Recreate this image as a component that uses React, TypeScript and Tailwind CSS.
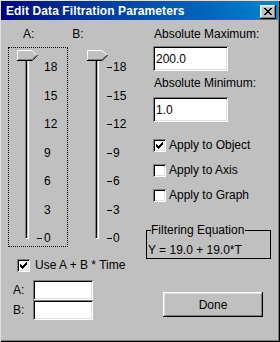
import React from "react";

const sunken =
  "shadow-[inset_1px_1px_#808080,inset_-1px_-1px_#ffffff,inset_2px_2px_#000000,inset_-2px_-2px_#dfdfdf]";
const raised =
  "shadow-[inset_-1px_-1px_#000000,inset_1px_1px_#ffffff,inset_-2px_-2px_#808080,inset_2px_2px_#dfdfdf]";

function Check({ checked }: { checked: boolean }) {
  return (
    <svg width="13" height="13" viewBox="0 0 13 13" className="shrink-0 block">
      <rect x="0" y="0" width="13" height="13" fill="#808080" />
      <rect x="1" y="1" width="12" height="12" fill="#ffffff" />
      <rect x="1" y="1" width="11" height="11" fill="#000000" />
      <rect x="2" y="2" width="10" height="10" fill="#dfdfdf" />
      <rect x="2" y="2" width="9" height="9" fill="#ffffff" />
      {checked && (
        <path
          d="M3 5h1v1h1v1h1V6h1V5h1V4h1V3h1v3h-1v1h-1v1h-1v1h-1v1H5V9H4V8H3z"
          fill="#000000"
        />
      )}
    </svg>
  );
}

function Thumb() {
  return (
    <svg width="21" height="11" viewBox="0 0 21 11" className="block">
      <polygon points="0,0 15,0 20,5 15,10 0,10" fill="#c0c0c0" />
      <polyline points="0.5,10 0.5,0.5 15,0.5 19.5,5" fill="none" stroke="#ffffff" strokeWidth="1" />
      <polyline points="1,9.5 15,9.5 19,5.5" fill="none" stroke="#808080" strokeWidth="1" />
      <polyline points="0,10.5 15.2,10.5 20.5,5.2" fill="none" stroke="#000000" strokeWidth="1" />
    </svg>
  );
}

function Slider({
  labels,
  focused,
  allTicks,
  numLeft,
}: {
  labels: string[];
  focused: boolean;
  allTicks: boolean;
  numLeft: number;
}) {
  return (
    <div
      className={
        "relative w-[60px] h-[200px] border border-dotted " +
        (focused ? "border-black" : "border-transparent")
      }
    >
      {/* track */}
      <div className="absolute left-[16px] top-[6px] w-[4px] h-[185px] border-l border-t border-l-[#808080] border-t-[#808080] border-r border-b border-r-white border-b-white">
        <div className="w-[1px] h-full bg-black ml-0" />
      </div>
      {/* thumb */}
      <div className="absolute left-[8px] top-[2px]">
        <Thumb />
      </div>
      {labels.map((l, i) => {
        const center = 67 + i * 28.5 - 48;
        const showTick = allTicks || i === labels.length - 1;
        return (
          <React.Fragment key={l}>
            {showTick && (
              <div
                className="absolute left-[28px] w-[5px] h-[1px] bg-black"
                style={{ top: Math.round(center) }}
              />
            )}
            <div
              className="absolute leading-[14px]"
              style={{ top: Math.round(center - 7), left: numLeft }}
            >
              {l}
            </div>
          </React.Fragment>
        );
      })}
    </div>
  );
}

export default function App() {
  const aLabels = ["18", "15", "12", "9", "6", "3", "0"];
  const bLabels = ["18", "15", "12", "9", "6", "3", "0"];
  return (
    <div className="w-[280px] h-[342px] bg-[#c0c0c0] text-black text-[12px] leading-[14px] font-['Liberation_Sans',Arial,sans-serif] pt-[1px] pl-[1px] pr-[2px] shadow-[inset_1px_1px_#dfdfdf,inset_-1px_-1px_#000000,inset_-2px_-2px_#808080] overflow-hidden">
      {/* Title bar */}
      <div className="h-[19px] bg-linear-to-r from-[#000080] to-[#1084d0] flex items-center justify-between pl-[5px] pr-[2px]">
        <span className="text-white font-bold text-[12px] leading-[14px] mt-[1px] tracking-[0.1px]">
          Edit Data Filtration Parameters
        </span>
        <div className={"w-[16px] h-[14px] bg-[#c0c0c0] flex items-center justify-center mt-[2px] " + raised}>
          <svg width="8" height="7" viewBox="0 0 8 7" className="block mt-[-1px]">
            <path d="M0 0h2v1h1v1h2V1h1V0h2v1H7v1H6v1H5v1h1v1h1v1h1v1H6V6H5V5H3v1H2v1H0V6h1V5h1V4h1V3H2V2H1V1H0z" fill="#000" />
          </svg>
        </div>
      </div>

      <div className="flex">
        {/* Left column */}
        <div className="w-[145px] flex flex-col">
          <div className="flex mt-[7px] h-[14px]">
            <span className="ml-[22px]">A:</span>
            <span className="ml-[38px]">B:</span>
          </div>
          <div className="flex mt-[6px] ml-[7px] gap-[10px]">
            <Slider labels={aLabels} focused allTicks={false} numLeft={35} />
            <Slider labels={bLabels} focused={false} allTicks numLeft={34} />
          </div>
          <div className="flex items-center mt-[11px] ml-[16px] gap-[5px] h-[14px]">
            <Check checked />
            <span>Use A + B * Time</span>
          </div>
          <div className="flex flex-col mt-[8px]">
            <div className="flex items-center h-[20px]">
              <span className="ml-[12px] w-[20px]">A:</span>
              <div className={"w-[60px] h-[20px] bg-white " + sunken} />
            </div>
            <div className="flex items-center h-[20px]">
              <span className="ml-[12px] w-[20px]">B:</span>
              <div className={"w-[60px] h-[20px] bg-white " + sunken} />
            </div>
          </div>
        </div>

        {/* Right column */}
        <div className="flex flex-col ml-[7px] w-[125px]">
          <div className="mt-[7px] ml-[1px]">Absolute Maximum:</div>
          <div className={"mt-[5px] w-[75px] h-[25px] bg-white flex items-center pl-[3px] " + sunken}>
            200.0
          </div>
          <div className="mt-[5px] ml-[1px]">Absolute Minimum:</div>
          <div className={"mt-[7px] w-[75px] h-[25px] bg-white flex items-center pl-[3px] " + sunken}>
            1.0
          </div>
          <div className="flex flex-col gap-[11px] mt-[16px]">
            <div className="flex items-center gap-[3px] h-[14px]">
              <Check checked />
              <span>Apply to Object</span>
            </div>
            <div className="flex items-center gap-[3px] h-[14px]">
              <Check checked={false} />
              <span>Apply to Axis</span>
            </div>
            <div className="flex items-center gap-[3px] h-[14px]">
              <Check checked={false} />
              <span>Apply to Graph</span>
            </div>
          </div>
          {/* Group box */}
          <div className="relative mt-[28px] ml-[-7px] w-[125px] h-[29px] border border-black">
            <span className="absolute left-[4px] top-[-8px] bg-[#c0c0c0] pr-[1px] leading-[14px]">
              Filtering Equation
            </span>
            <div className="mt-[12px] ml-[1px] leading-[14px]">Y = 19.0 + 19.0*T</div>
          </div>
          <div className={"mt-[33px] ml-[10px] w-[100px] h-[25px] bg-[#c0c0c0] flex items-center justify-center " + raised}>
            Done
          </div>
        </div>
      </div>
    </div>
  );
}
